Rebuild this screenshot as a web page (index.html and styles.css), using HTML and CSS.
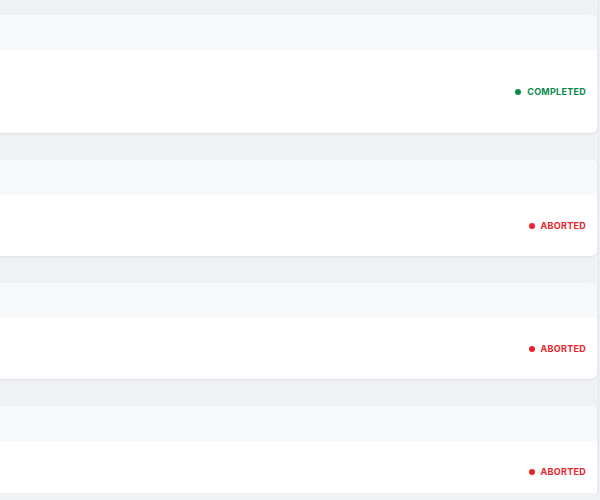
FILE: index.html
```html
<!DOCTYPE html>
<html lang="en">
<head>
<meta charset="utf-8">
<title>Runs</title>
<link rel="stylesheet" href="styles.css">
</head>
<body>
<div class="viewport">
  <div class="list">
    <div class="card">
      <div class="card-head"></div>
      <div class="card-body tall">
        <span class="status completed"><span class="dot"></span>COMPLETED</span>
      </div>
    </div>
    <div class="card">
      <div class="card-head"></div>
      <div class="card-body">
        <span class="status aborted"><span class="dot"></span>ABORTED</span>
      </div>
    </div>
    <div class="card">
      <div class="card-head"></div>
      <div class="card-body">
        <span class="status aborted"><span class="dot"></span>ABORTED</span>
      </div>
    </div>
    <div class="card">
      <div class="card-head"></div>
      <div class="card-body">
        <span class="status aborted"><span class="dot"></span>ABORTED</span>
      </div>
    </div>
  </div>
</div>
</body>
</html>
```
FILE: styles.css
```css
html, body {
  margin: 0;
  padding: 0;
  background: #f0f1f4;
  overflow: hidden;
  font-family: Inter, "Liberation Sans", sans-serif;
}
.viewport {
  width: 598px;
  height: 493px;
  overflow: hidden;
  border-right: 1px solid #e4e6ea;
}
.list {
  display: flex;
  flex-direction: column;
  gap: 27px;
  padding-top: 15px;
  margin-left: -20px;
  margin-right: 1px;
}
.card {
  background: #ffffff;
  border-radius: 6px;
  box-shadow: 0 1px 2px rgba(20, 30, 50, 0.08);
  overflow: hidden;
}
.card-head {
  height: 35px;
  background: #f7f8fa;
}
.card-body {
  height: 61px;
  display: flex;
  align-items: center;
  justify-content: flex-end;
  padding-right: 11px;
}
.card-body.tall {
  height: 83px;
}
.status {
  display: flex;
  align-items: center;
  gap: 6px;
  font-size: 9px;
  font-weight: 700;
  letter-spacing: 0.03em;
}
.dot {
  width: 6px;
  height: 6px;
  border-radius: 50%;
  background: currentColor;
}
.completed { color: #0b8a50; }
.aborted { color: #e8232b; }
```
